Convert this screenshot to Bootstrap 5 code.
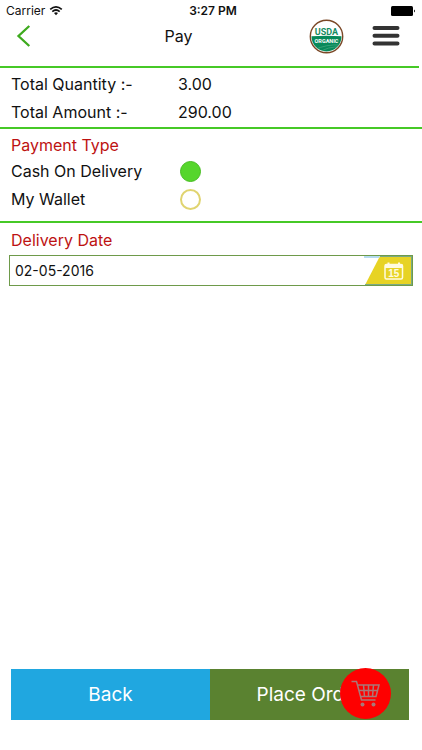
<!DOCTYPE html>
<html lang="en">
<head>
<meta charset="utf-8">
<meta name="viewport" content="width=device-width, initial-scale=1">
<title>Pay</title>
<link href="https://cdn.jsdelivr.net/npm/bootstrap@5.3.0/dist/css/bootstrap.min.css" rel="stylesheet">
<style>
body { font-family: Inter, "Liberation Sans", sans-serif; font-size: 16px; line-height: 28px; color: #111; background: #fff; }
.status-bar { height: 22px; padding: 0 6px; font-size: 12px; line-height: 22px; }
.status-bar > * { flex: 1 1 0; }
.status-time { padding-left: 4px; }
.top-bar { height: 44px; padding: 0 22px 16px 16px; }
.top-title { font-size: 16px; line-height: 28px; }
.rule { height: 2px; background: #46c926; }
.rule-top { margin-right: 3px; }
.icon-btn { line-height: 0; }
.logo-link { line-height: 0; margin-right: 28px; }
.totals { padding: 2px 11px 1px; }
.totals dt { width: 167px; }
.payment { padding: 4px 11px 8px; }
.pay-row label { width: 169px; }
.pay-heading { font-size: 16px; line-height: 24px; color: #bd1212; }
.pay-radio { width: 21px; height: 21px; border: 2px solid #e0d470; border-radius: 50%; background: #fff; }
.pay-radio:checked { background: #56d62c; border: 1px solid #47bd22; }
.delivery { padding: 5px 9px 0; }
.delivery .pay-heading { padding: 0 2px; margin-bottom: 3px; }
.date-box { height: 31px; border: 1px solid #6e9a4a; }
.date-input { min-width: 0; padding: 0 5px; font-size: 14px; line-height: 28px; color: #111; background: transparent; }
.date-btn { line-height: 0; }
.foot { padding: 0 13px 30px 11px; }
.foot-btn { height: 51px; font-size: 19px; line-height: 28px; color: #fff; }
.back-btn { background: #20a7e0; }
.order-btn { background: #5a8230; }
.cart-btn { top: -1px; right: 18px; width: 51px; height: 51px; background: #fe0000; line-height: 0; }
</style>
</head>
<body class="d-flex flex-column min-vh-100">
<div class="status-bar d-flex align-items-center">
  <div class="d-flex align-items-center gap-1">Carrier
    <svg width="14" height="10" viewBox="0 0 13 10" fill="none" stroke="#111" stroke-width="1.700" aria-hidden="true"><path d="M.7 3.400Q6.500-1.600 12.300 3.400M2.800 5.600Q6.500 2.400 10.200 5.600"/><path d="M4.500 7Q6.500 5.500 8.500 7L6.500 9.300Z" fill="#111" stroke="none"/></svg>
  </div>
  <div class="status-time text-center fw-semibold">3:27 PM</div>
  <div class="d-flex justify-content-end">
    <svg width="25" height="10" viewBox="0 0 25 10" aria-label="Battery full" role="img"><rect width="22" height="10" rx="1.500"/><path d="M23 3.500q2 1.500 0 3z"/></svg>
  </div>
</div>
<header>
  <div class="top-bar d-flex align-items-center">
    <button type="button" class="icon-btn btn p-0 border-0 rounded-0" aria-label="Go back">
      <svg width="16" height="24" viewBox="0 0 16 24" fill="none" stroke="#3eaa1e" stroke-width="2.300"><path d="M13.300 2L2.500 12L13.300 22"/></svg>
    </button>
    <h1 class="top-title fw-normal text-center flex-grow-1 mb-0 ps-3">Pay</h1>
    <a href="#organic" class="logo-link" aria-label="USDA Organic">
      <svg width="35" height="35" viewBox="0 0 35 35">
        <defs><clipPath id="seal"><circle cx="17.500" cy="17.500" r="15"/></clipPath></defs>
        <circle cx="17.500" cy="17.500" r="16.200" fill="#fff" stroke="#7b4827" stroke-width="1.400"/>
        <g clip-path="url(#seal)"><path d="M0 17.500Q17.500 16 35 17.500V35H0Z" fill="#07895a"/>
        <path d="M5 31Q17 25 32 26M10 34Q18 27 33 28" fill="none" stroke="#55ae88" stroke-width=".6"/></g>
        <text x="17.500" y="15.500" text-anchor="middle" font-family="Roboto, sans-serif" font-weight="700" font-size="9" fill="#158c5f">USDA</text>
        <text x="17.500" y="23.500" text-anchor="middle" font-family="Roboto, sans-serif" font-weight="700" font-size="5.500" fill="#fff">ORGANIC</text>
      </svg>
    </a>
    <button type="button" class="icon-btn btn p-0 border-0 rounded-0" aria-label="Menu">
      <svg width="28" height="20" viewBox="0 0 28 20" stroke="#333" stroke-width="4" stroke-linecap="round"><path d="M2.500 2H25.500M2.500 9.700H25.500M2.500 17.400H25.500"/></svg>
    </button>
  </div>
  <div class="rule rule-top"></div>
</header>
<main>
  <dl class="totals mb-0">
    <div class="d-flex"><dt class="fw-normal">Total Quantity :-</dt><dd class="mb-0">3.00</dd></div>
    <div class="d-flex"><dt class="fw-normal">Total Amount :-</dt><dd class="mb-0">290.00</dd></div>
  </dl>
  <div class="rule"></div>
  <section class="payment">
    <h2 class="pay-heading fw-normal mb-0">Payment Type</h2>
    <div class="pay-row d-flex align-items-center">
      <label for="cod">Cash On Delivery</label>
      <input class="pay-radio m-0 form-check-input shadow-none" type="radio" name="payment" id="cod" checked>
    </div>
    <div class="pay-row d-flex align-items-center">
      <label for="wallet">My Wallet</label>
      <input class="pay-radio m-0 form-check-input shadow-none" type="radio" name="payment" id="wallet">
    </div>
  </section>
  <div class="rule"></div>
  <section class="delivery">
    <h2 class="pay-heading fw-normal"><label for="date">Delivery Date</label></h2>
    <div class="date-box d-flex">
      <input type="text" id="date" class="date-input flex-grow-1 border-0" value="02-05-2016">
      <button type="button" class="date-btn btn p-0 border-0 rounded-0" aria-label="Choose date">
        <svg width="48" height="29" viewBox="0 0 48 29">
          <path d="M16 0H48V29H1Z" fill="#e7d324"/><path d="M0 0H16L15 2H0Z" fill="#b5dcf0"/><path d="M16 .5H48M1 28.500H48M47.500 0V29" stroke="#7aa984" stroke-width="1"/>
          <rect x="21" y="8.500" width="17.500" height="14.500" rx="1.500" fill="none" stroke="#fffbe0" stroke-width="1.500"/><path d="M21 8.500H38.500V12H21Z" fill="#fffbe0"/><path d="M24.500 6.500V10M35 6.500V10" stroke="#fffbe0" stroke-width="2"/>
          <text x="29.700" y="21" text-anchor="middle" font-family="Liberation Sans, sans-serif" font-weight="700" font-size="10" fill="#fffbe0">15</text>
        </svg>
      </button>
    </div>
  </section>
</main>
<footer class="foot mt-auto">
  <div class="d-flex position-relative">
    <button type="button" class="foot-btn back-btn btn col-6 p-0 border-0 rounded-0">Back</button>
    <button type="button" class="foot-btn order-btn btn col-6 p-0 border-0 rounded-0">Place Order</button>
    <button type="button" class="cart-btn btn p-0 border-0 rounded-circle position-absolute" aria-label="Cart">
      <svg width="51" height="51" viewBox="0 0 51 51" fill="none" stroke="#a87878" stroke-width="1.500"><path d="M11.500 13.500H16.500L21.500 32H35.500M17.500 17H39L36 28.500H20.500M18.500 22.500H37.500M23.500 17L24.500 28.500M28.500 17V28.500M33.500 17L32.500 28.500"/><circle cx="22.500" cy="36.500" r="2" fill="#a87878" stroke="none"/><circle cx="33.500" cy="36.500" r="2" fill="#a87878" stroke="none"/></svg>
    </button>
  </div>
</footer>
<script src="https://cdn.jsdelivr.net/npm/bootstrap@5.3.0/dist/js/bootstrap.bundle.min.js"></script>
</body>
</html>
